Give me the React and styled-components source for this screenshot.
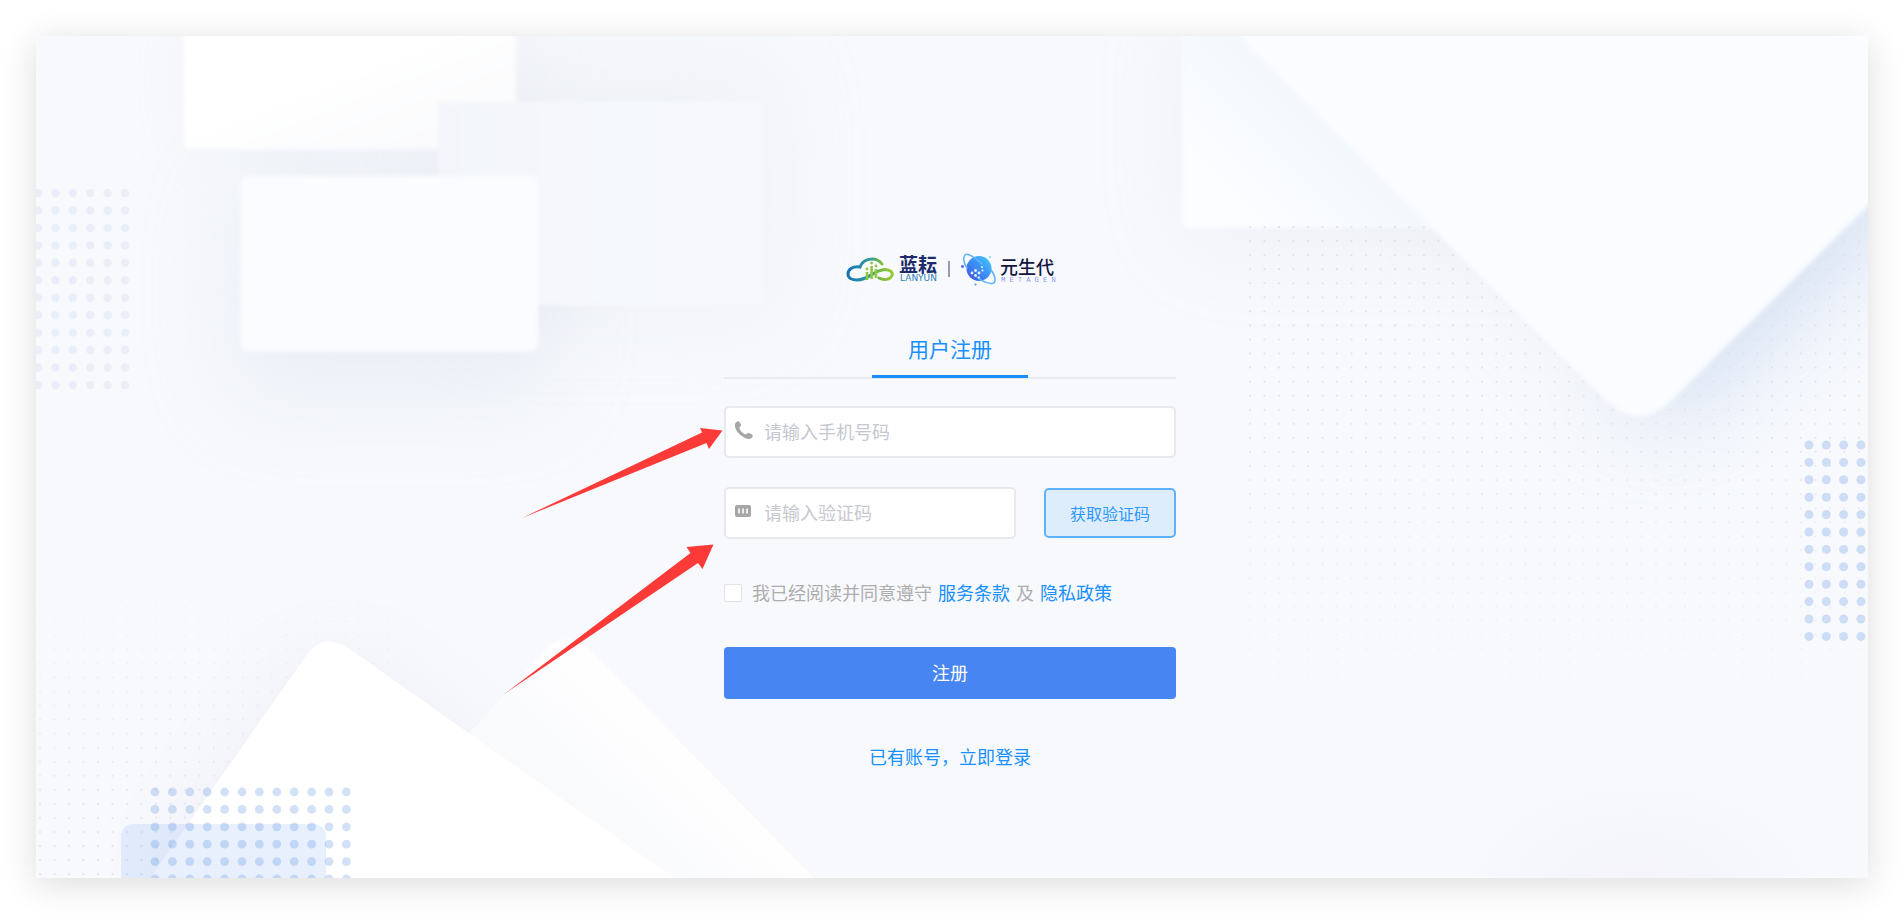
import React, { useState } from 'react';
import styled, { createGlobalStyle } from 'styled-components';

const GlobalStyle = createGlobalStyle`
  * {
    box-sizing: border-box;
  }

  body {
    margin: 0;
    background: #fff;
    font-family: 'Noto Sans CJK SC', 'Liberation Sans', sans-serif;
  }

  button,
  input {
    font-family: inherit;
  }
`;

const Page = styled.div`
  min-height: 100vh;
  display: flex;
  padding: 36px;
`;

const Panel = styled.main`
  position: relative;
  flex: 1;
  display: flex;
  justify-content: center;
  align-items: flex-start;
  padding: 206px 4px 60px 0;
  background: #f7f9fd;
  box-shadow: 0 6px 34px rgba(0, 0, 0, 0.14);
`;

const Backdrop = styled.svg`
  position: absolute;
  top: 0;
  left: 0;
  width: 100%;
  height: 100%;
`;

const Arrows = styled.svg`
  position: absolute;
  top: 0;
  left: 0;
  width: 100%;
  height: 100%;
  pointer-events: none;
`;

const Form = styled.form`
  position: relative;
  width: 452px;
  display: flex;
  flex-direction: column;
`;

const Brand = styled.div`
  display: flex;
  justify-content: center;
  align-items: center;
  height: 54px;
  padding-left: 4px;
`;

const BrandLogo = styled.svg`
  display: block;
  width: 212px;
  height: 36px;
`;

const Tabs = styled.div`
  display: flex;
  justify-content: center;
  margin-top: 22px;
  border-bottom: 2px solid #e9ebf0;
`;

const Tab = styled.button`
  width: 156px;
  height: 60px;
  margin-bottom: -1px;
  padding: 2px 0 0;
  border: none;
  border-bottom: 3px solid #1890ff;
  background: none;
  color: #1890ff;
  font-size: 21px;
  line-height: 30px;
  cursor: pointer;
`;

const Row = styled.div`
  display: flex;
  align-items: center;
  gap: 28px;
  margin-top: ${({ $top }) => $top}px;
`;

const Field = styled.label`
  flex: 1;
  min-width: 0;
  height: 52px;
  display: flex;
  align-items: center;
  gap: 10px;
  padding: 0 8px;
  border: 2px solid #e7e9ef;
  border-radius: 5px;
  background: #fff;
`;

const FieldIcon = styled.svg`
  flex: none;
  width: 20px;
  height: 24px;
`;

const FieldInput = styled.input`
  flex: 1;
  min-width: 0;
  height: 46px;
  padding: 0 0 2px;
  border: none;
  outline: none;
  background: none;
  color: #606266;
  font-size: 18px;

  &::placeholder {
    color: #c5c8cf;
    opacity: 1;
  }
`;

const CodeButton = styled.button`
  width: 132px;
  height: 50px;
  padding: 0;
  border: 2px solid #5db2ff;
  border-radius: 5px;
  background: #deedfc;
  color: #2f97ff;
  font-size: 16px;
  cursor: pointer;
`;

const Agreement = styled.div`
  display: flex;
  align-items: center;
  gap: 10px;
  margin-top: 40px;
  color: #adadad;
  font-size: 18px;
  line-height: 26px;
`;

const AgreementText = styled.div`
  display: flex;
  gap: 6px;
  padding-bottom: 2px;
`;

const Checkbox = styled.input`
  appearance: none;
  flex: none;
  width: 18px;
  height: 18px;
  margin: 0;
  border: 1px solid #e0e3e9;
  border-radius: 2px;
  background: #fff;
  cursor: pointer;

  &:checked {
    border-color: #4786f2;
    background: #4786f2;
  }
`;

const TextLink = styled.a`
  color: #1890ff;
  text-decoration: none;
`;

const SubmitButton = styled.button`
  height: 52px;
  margin-top: 40px;
  padding: 0 0 2px;
  border: none;
  border-radius: 4px;
  background: #4786f2;
  color: #fff;
  font-size: 18px;
  cursor: pointer;
`;

const LoginLine = styled.p`
  margin: 43px 0 0;
  text-align: center;
  font-size: 18px;
  line-height: 28px;
`;

const DotGrid = ({ x, y, cols, rows, stepX, stepY, r, fill }) => {
  const dots = [];
  for (let row = 0; row < rows; row++) {
    for (let col = 0; col < cols; col++) {
      dots.push(
        <circle key={`${row}-${col}`} cx={x + col * stepX} cy={y + row * stepY} r={r} fill={fill} />
      );
    }
  }
  return <g>{dots}</g>;
};

const Background = () => (
  <Backdrop viewBox="36 36 1832 842" preserveAspectRatio="none" aria-hidden="true">
    <defs>
      <filter id="soft" x="-60%" y="-60%" width="220%" height="220%">
        <feGaussianBlur stdDeviation="46" />
      </filter>
      <filter id="edge" x="-5%" y="-5%" width="110%" height="110%">
        <feGaussianBlur stdDeviation="2" />
      </filter>
      <linearGradient id="cardTop" x1="0" y1="0" x2="1" y2="1">
        <stop offset="0.4" stopColor="#ffffff" />
        <stop offset="1" stopColor="#f9fafc" />
      </linearGradient>
      <linearGradient id="cardBack" x1="0" y1="0" x2="1" y2="0">
        <stop offset="0" stopColor="#f3f5fa" />
        <stop offset="0.5" stopColor="#f5f8fc" />
        <stop offset="1" stopColor="#f6f8fc" />
      </linearGradient>
      <linearGradient id="sheetBack" gradientUnits="userSpaceOnUse" x1="1320" y1="120" x2="1240" y2="200">
        <stop offset="0" stopColor="#f3f8fc" />
        <stop offset="1" stopColor="#fcfdff" />
      </linearGradient>
      <linearGradient id="peakBack" gradientUnits="userSpaceOnUse" x1="590" y1="820" x2="660" y2="745">
        <stop offset="0" stopColor="#f9fafc" />
        <stop offset="1" stopColor="#fefeff" />
      </linearGradient>
      <linearGradient id="fadeDown" x1="0" y1="0" x2="0" y2="1">
        <stop offset="0" stopColor="#fff" />
        <stop offset="0.4" stopColor="#fff" stopOpacity="0.8" />
        <stop offset="1" stopColor="#fff" stopOpacity="0" />
      </linearGradient>
      <linearGradient id="fadeUp" x1="0" y1="1" x2="0" y2="0">
        <stop offset="0" stopColor="#fff" />
        <stop offset="1" stopColor="#fff" stopOpacity="0" />
      </linearGradient>
      <mask id="maskDown">
        <rect x="1240" y="220" width="640" height="510" fill="url(#fadeDown)" />
      </mask>
      <mask id="maskUp">
        <rect x="36" y="560" width="370" height="320" fill="url(#fadeUp)" />
      </mask>
      <radialGradient id="halo">
        <stop offset="0" stopColor="#f4f4fa" />
        <stop offset="1" stopColor="#f7f9fd" />
      </radialGradient>
    </defs>

    {/* floating cards, top left */}
    <rect x="200" y="0" width="320" height="160" fill="#cdd3e0" opacity="0.16" filter="url(#soft)" />
    <rect x="450" y="60" width="330" height="260" fill="#cfd3df" opacity="0.19" filter="url(#soft)" />
    <rect x="230" y="180" width="320" height="220" fill="#c4ccde" opacity="0.23" filter="url(#soft)" />
    <rect x="184" y="20" width="332" height="129" fill="url(#cardTop)" filter="url(#edge)" />
    <rect x="438" y="102" width="326" height="203" rx="4" fill="url(#cardBack)" filter="url(#edge)" />
    <rect x="241" y="176" width="297" height="175" rx="6" fill="#fbfcff" filter="url(#edge)" />

    {/* sheets, top right */}
    <rect x="1190" y="0" width="400" height="240" fill="#c5c8d2" opacity="0.2" filter="url(#soft)" />
    <path d="M1300 36 L1640 440 L1880 220 V36 Z" fill="#c9cdd8" opacity="0.2" filter="url(#soft)" />
    <path d="M1640 200 L1640 420 L1690 420 L1900 220 L1900 120 Z" fill="#a9c4ee" opacity="0.34" filter="url(#soft)" />
    <rect x="1182" y="20" width="420" height="208" rx="8" fill="url(#sheetBack)" filter="url(#edge)" />
    <g mask="url(#maskDown)">
      <DotGrid x={1250} y={227} cols={43} rows={36} stepX={14.5} stepY={14.06} r={1.1} fill="#dfe1e6" />
    </g>
    <path
      d="M1218 16 L1606 400 Q1640 433 1674 398 L1890 184 V16 Z"
      fill="#fafcff"
      filter="url(#edge)"
    />

    {/* peaks, bottom left */}
    <path d="M170 890 L330 660 L620 890 Z" fill="#cbccd9" opacity="0.36" filter="url(#soft)" />
    <g mask="url(#maskUp)">
      <DotGrid x={40} y={579} cols={25} rows={22} stepX={14.5} stepY={14.06} r={1.1} fill="#dfe1e6" />
    </g>
    <path d="M440 765 L545 650 Q568 628 590 650 L814 878 H600 Z" fill="url(#peakBack)" />
    <path d="M150 878 L308 653 Q326 630 354 652 L674 878 Z" fill="#fff" />
    <rect x="121" y="824" width="205" height="80" rx="12" fill="#4a8bf5" opacity="0.13" />

    <DotGrid x={38} y={193} cols={6} rows={12} stepX={17.4} stepY={17.45} r={4.2} fill="#e9eef8" />
    <DotGrid x={155} y={792} cols={12} rows={6} stepX={17.4} stepY={17.4} r={4.4} fill="rgba(88, 144, 222, 0.27)" />
    <DotGrid x={1809} y={445} cols={4} rows={12} stepX={17.3} stepY={17.4} r={4.5} fill="#cdddf5" />

    <ellipse cx="1640" cy="890" rx="180" ry="112" fill="url(#halo)" />
  </Backdrop>
);

const Logo = () => (
  <BrandLogo viewBox="846 251 212 36" role="img" aria-label="蓝耘 元生代">
    <defs>
      <linearGradient id="cloud" x1="0" y1="0" x2="1" y2="0">
        <stop offset="0" stopColor="#1673b4" />
        <stop offset="0.5" stopColor="#2f9c9a" />
        <stop offset="0.75" stopColor="#7dbb3c" />
        <stop offset="1" stopColor="#9bc932" />
      </linearGradient>
      <linearGradient id="planet" x1="1" y1="0" x2="0" y2="1">
        <stop offset="0" stopColor="#3fd0fb" />
        <stop offset="0.5" stopColor="#3c8df5" />
        <stop offset="1" stopColor="#3a4fe4" />
      </linearGradient>
    </defs>
    <path
      d="M882 264 C877 257 864 257 860 267 C853 266 848 269 848 274 C848 278 852 280 857 280 C869 280 874 270 885 269.5 C891 269.5 893 273 892 275.5 C890 280 884 280.5 879 278"
      fill="none"
      stroke="url(#cloud)"
      strokeWidth="3"
      strokeLinecap="round"
    />
    <path d="M867 272 V280 M871.6 266 V279 M876 269 V278" stroke="#92c83e" strokeWidth="2.6" />
    <g fill="#92c83e">
      <circle cx="867" cy="269" r="1.4" />
      <circle cx="871.6" cy="263" r="1.4" />
      <circle cx="876" cy="266" r="1.4" />
    </g>
    <text x="899" y="272" fontSize="19" fontWeight="700" fill="#1d2a6b">蓝耘</text>
    <text x="900" y="281" fontSize="9" fontFamily="DejaVu Sans, sans-serif" fill="#2d7fb5">
      LANYUN
    </text>
    <path d="M949 261 V277" stroke="#33406f" strokeWidth="1" />
    <circle cx="979" cy="268.5" r="12.5" fill="url(#planet)" />
    <path
      d="M967 268 C962 261 963 253 968 254.5 C973 256 978 260 982 264 M990.5 269 C996 277 997 284 991 283.5 C986 283 981 280.5 977 277"
      fill="none"
      stroke="#62b4fa"
      strokeWidth="1.6"
      strokeLinecap="round"
    />
    <g fill="#fff" opacity="0.9">
      <circle cx="972" cy="273" r="1.4" />
      <circle cx="975.5" cy="270.5" r="1.4" />
      <circle cx="975.5" cy="275.5" r="1.4" />
      <circle cx="979" cy="273" r="1.4" />
      <circle cx="982" cy="267" r="1" />
      <circle cx="979" cy="277.5" r="1.1" />
      <circle cx="982.5" cy="270.5" r="1.1" />
    </g>
    <circle cx="962.5" cy="266.5" r="1.4" fill="#4b64ee" />
    <circle cx="975.5" cy="284.5" r="1.1" fill="#5b8cf5" />
    <circle cx="990" cy="257" r="1.1" fill="#6ce0fb" />
    <text x="1000" y="274" fontSize="18" fontWeight="500" fill="#12163f">元生代</text>
    <text x="1001" y="282" fontSize="7" fontFamily="Liberation Mono, monospace" fill="#8d95f5">
      M E T A G E N
    </text>
  </BrandLogo>
);

const App = () => {
  const [phone, setPhone] = useState('');
  const [code, setCode] = useState('');
  const [agreed, setAgreed] = useState(false);

  const handleSubmit = (event) => {
    event.preventDefault();
  };

  return (
    <>
      <GlobalStyle />
      <Page>
        <Panel>
          <Background />
          <Form onSubmit={handleSubmit}>
            <Brand>
              <Logo />
            </Brand>
            <Tabs role="tablist">
              <Tab type="button" role="tab" aria-selected="true">用户注册</Tab>
            </Tabs>

            <Row $top={27}>
              <Field>
                <FieldIcon viewBox="0 0 20 24" aria-hidden="true">
                  <path
                    d="M1.6 2.6 L3.4 1.4 Q4.9 1 5.7 2.2 L6.9 4.6 Q7.2 6.2 5.4 7.4 Q5.2 9.2 7.6 11.8 Q10 14.4 12 14.6 Q13.2 12.6 14.8 12.9 L17.8 14.3 Q19.2 15.2 18.6 16.6 L17.4 18.2 Q15.2 19.8 11.4 18.2 Q6.2 16.2 3 11.6 Q-0.4 6.4 1.6 2.6 Z"
                    fill="#a6a6a6"
                  />
                </FieldIcon>
                <FieldInput
                  type="tel"
                  placeholder="请输入手机号码"
                  aria-label="手机号码"
                  value={phone}
                  onChange={(e) => setPhone(e.target.value)}
                />
              </Field>
            </Row>

            <Row $top={29}>
              <Field>
                <FieldIcon viewBox="0 0 20 24" aria-hidden="true">
                  <rect x="1" y="4" width="16" height="12" rx="2" fill="#a6a6a6" />
                  <path d="M5 7.5 V12.5 M9 7.5 V12.5 M13 7.5 V12.5" stroke="#fff" strokeWidth="1.6" />
                </FieldIcon>
                <FieldInput
                  type="text"
                  placeholder="请输入验证码"
                  aria-label="验证码"
                  value={code}
                  onChange={(e) => setCode(e.target.value)}
                />
              </Field>
              <CodeButton type="button">获取验证码</CodeButton>
            </Row>

            <Agreement>
              <Checkbox
                id="agree"
                type="checkbox"
                checked={agreed}
                onChange={(e) => setAgreed(e.target.checked)}
              />
              <AgreementText>
                <label htmlFor="agree">我已经阅读并同意遵守</label>
                <TextLink href="#terms">服务条款</TextLink>
                <span>及</span>
                <TextLink href="#privacy">隐私政策</TextLink>
              </AgreementText>
            </Agreement>

            <SubmitButton type="submit">注册</SubmitButton>
            <LoginLine>
              <TextLink href="#login">已有账号，立即登录</TextLink>
            </LoginLine>
          </Form>

          {/* hand-drawn pointers to the two fields */}
          <Arrows viewBox="36 36 1832 842" aria-hidden="true">
            <path d="M522 518 L702 432.5 L700 428 L722.5 430.5 L709 449 L706.5 443 Z" fill="#fc3a38" />
            <path d="M503 695 L690.5 553 L686.5 547 L713.5 544.5 L702.5 569 L698 563 Z" fill="#fc3a38" />
          </Arrows>
        </Panel>
      </Page>
    </>
  );
};

export default App;
